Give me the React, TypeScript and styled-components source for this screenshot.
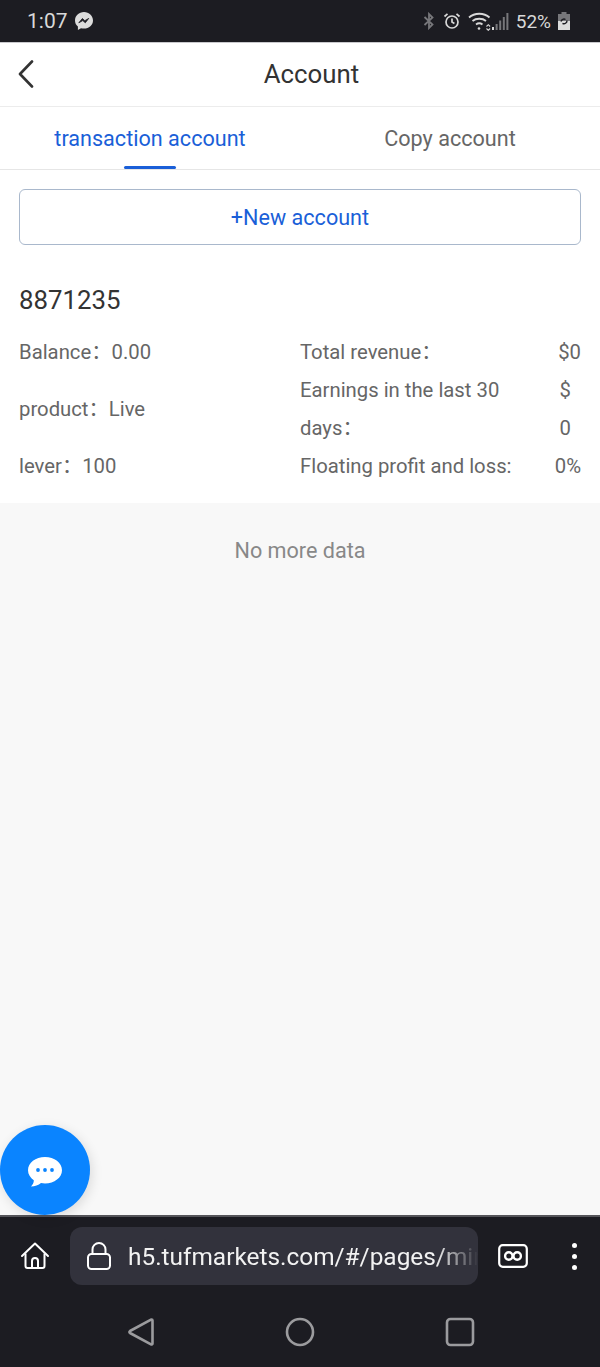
import styled, { createGlobalStyle } from "styled-components";

const GlobalStyle = createGlobalStyle`
    html, body {
        margin: 0;
        padding: 0;
        background: #f8f8f8;
    }
    * {
        box-sizing: border-box;
    }
    body {
        font-family: Roboto, "Noto Sans CJK SC", sans-serif;
    }
`;

const leftRows = [
    { label: "Balance：", value: "0.00" },
    { label: "product：", value: "Live" },
    { label: "lever：", value: "100" },
];

const rightRows = [
    { label: "Total revenue：", value: "$0", inset: 0 },
    { label: "Earnings in the last 30 days：", value: "$ 0", inset: 10 },
    { label: "Floating profit and loss:", value: "0%", inset: 0 },
];

function App() {
    return (
        <Page>
            <GlobalStyle />
            <StatusBar>
                <StatusLeft>
                    <StatusTime>1:07</StatusTime>
                    <svg width="20" height="20" viewBox="0 0 20 20">
                        <path
                            d="M10 1C5 1 1 4.7 1 9.4c0 2.5 1.1 4.6 2.9 6.1V19l3.1-1.8c1 .3 2 .4 3 .4 5 0 9-3.6 9-8.2S15 1 10 1z"
                            fill="#dcdcdc"
                        />
                        <path
                            d="M4.8 11.8l3.6-4.3 2.4 2.2 3.9-2.3-3.4 4.4-2.5-2.2z"
                            fill="#1c1c22"
                            stroke="#1c1c22"
                            strokeWidth="0.8"
                        />
                    </svg>
                </StatusLeft>
                <StatusRight>
                    <svg width="14" height="18" viewBox="0 0 14 18" fill="none" stroke="#77777b" strokeWidth="1.8">
                        <path d="M2.5 5l8 7.5L7 16V2l3.5 3.5-8 7.5" />
                    </svg>
                    <svg width="18" height="18" viewBox="0 0 18 18" fill="none" stroke="#d8d8d8" strokeWidth="1.7">
                        <circle cx="9" cy="10" r="6" />
                        <path d="M9 6.5V10l2.4 1.4" />
                        <path d="M1.5 4.5l3-2.6M16.5 4.5l-3-2.6" />
                    </svg>
                    <WifiGroup>
                        <svg width="24" height="20" viewBox="0 0 24 20" fill="none" stroke="#d8d8d8" strokeWidth="1.8">
                            <path d="M1 6.5c5.5-5 15-5 20.5 0" />
                            <path d="M4.5 10c3.5-3 10-3 13.5 0" />
                            <path d="M8 13.5c2-1.5 4.5-1.5 6.5 0" />
                            <circle cx="11" cy="17.5" r="1.3" fill="#d8d8d8" stroke="none" />
                            <path d="M18.5 15.5l1.8-1.8 1.8 1.8M18.5 17.5l1.8 1.8 1.8-1.8" strokeWidth="1.1" />
                        </svg>
                        <svg width="18" height="18" viewBox="0 0 18 18" fill="#77777b">
                            <rect x="0" y="15" width="2" height="3" fill="#d8d8d8" />
                            <rect x="3.6" y="12" width="2" height="6" />
                            <rect x="7.2" y="8.5" width="2" height="9.5" />
                            <rect x="10.8" y="5" width="2" height="13" />
                            <rect x="14.4" y="1" width="2" height="17" />
                        </svg>
                    </WifiGroup>
                    <BatteryText>52%</BatteryText>
                    <svg width="12" height="18" viewBox="0 0 12 18">
                        <rect x="3.5" y="0" width="5" height="2" fill="#77777b" />
                        <rect x="0" y="2" width="12" height="7" fill="#77777b" />
                        <rect x="0" y="9" width="12" height="9" fill="#dcdcdc" />
                        <path
                            d="M3 9.5a3 3 0 0 1 4.5-2M9 8.5a3 3 0 0 1-4.5 2.8"
                            fill="none"
                            stroke="#1c1c22"
                            strokeWidth="1.4"
                        />
                    </svg>
                </StatusRight>
            </StatusBar>

            <Header>
                <BackButton>
                    <svg width="18" height="28" viewBox="0 0 18 28" fill="none" stroke="#333" strokeWidth="2.6" strokeLinecap="round" strokeLinejoin="round">
                        <path d="M15 1.5L3 14l12 12.5" />
                    </svg>
                </BackButton>
                <HeaderTitle>Account</HeaderTitle>
            </Header>

            <Tabs>
                <Tab $active>transaction account</Tab>
                <Tab>Copy account</Tab>
            </Tabs>

            <Card>
                <NewAccount>+New account</NewAccount>
                <AccountNumber>8871235</AccountNumber>
                <Details>
                    <LeftColumn>
                        {leftRows.map((row) => (
                            <div key={row.label}>
                                {row.label}
                                {row.value}
                            </div>
                        ))}
                    </LeftColumn>
                    <RightColumn>
                        {rightRows.map((row) => (
                            <RightRow key={row.label}>
                                <span>{row.label}</span>
                                <RightValue $inset={row.inset}>{row.value}</RightValue>
                            </RightRow>
                        ))}
                    </RightColumn>
                </Details>
            </Card>

            <Main>
                <NoMore>No more data</NoMore>
                <ChatButton>
                    <svg width="36" height="32" viewBox="0 0 36 32">
                        <path
                            d="M18 1C8.6 1 1 6.9 1 14.2c0 4 2.3 7.6 5.8 10 .1 2.3-1 4.4-2.8 6.3 3.900 0 7.500-1.400 10-3.400 1.300.2 2.600.3 4 .3 9.400 0 17-5.900 17-13.200S27.400 1 18 1z"
                            fill="#fff"
                        />
                        <circle cx="11" cy="14" r="1.9" fill="#0a84ff" />
                        <circle cx="18" cy="14" r="1.9" fill="#0a84ff" />
                        <circle cx="25" cy="14" r="1.9" fill="#0a84ff" />
                    </svg>
                </ChatButton>
            </Main>

            <BrowserBar>
                <svg width="30" height="30" viewBox="0 0 30 30" fill="none" stroke="#fff" strokeWidth="2" strokeLinejoin="round">
                    <path d="M2 15L15 2.5 28 15" strokeLinecap="round" />
                    <path d="M5.5 12.5V25a2 2 0 0 0 2 2h15a2 2 0 0 0 2-2V12.5" />
                    <path d="M12 27v-7a3 3 0 0 1 6 0v7" />
                </svg>
                <UrlBox>
                    <svg width="26" height="30" viewBox="0 0 26 30" fill="none" stroke="#fff" strokeWidth="2">
                        <rect x="2" y="13" width="22" height="15" rx="3.5" />
                        <path d="M6.5 13V8.5a6.5 6.5 0 0 1 13 0V13" />
                    </svg>
                    <UrlText>h5.tufmarkets.com/#/pages/mine</UrlText>
                </UrlBox>
                <svg width="30" height="24" viewBox="0 0 30 24" fill="none" stroke="#fff">
                    <rect x="1.2" y="1.2" width="27.6" height="21.6" rx="3.5" strokeWidth="2.2" />
                    <circle cx="10.8" cy="12" r="3.7" strokeWidth="2.4" />
                    <circle cx="19.2" cy="12" r="3.7" strokeWidth="2.4" />
                </svg>
                <MenuDots>
                    <i />
                    <i />
                    <i />
                </MenuDots>
            </BrowserBar>

            <NavBar>
                <svg width="28" height="30" viewBox="0 0 28 30" fill="none" stroke="#9b9b9e" strokeWidth="2.6" strokeLinejoin="round">
                    <path d="M24.5 2.5c.6 0 1 .4 1 1v23c0 .8-.8 1.2-1.5.8L3 16c-.8-.5-.8-1.5 0-2L24 2.7z" />
                </svg>
                <svg width="30" height="30" viewBox="0 0 30 30" fill="none" stroke="#9b9b9e" strokeWidth="2.6">
                    <circle cx="15" cy="15" r="13" />
                </svg>
                <svg width="30" height="30" viewBox="0 0 30 30" fill="none" stroke="#9b9b9e" strokeWidth="2.6">
                    <rect x="2" y="2" width="26" height="26" rx="3.5" />
                </svg>
            </NavBar>
        </Page>
    );
}

export default App;

const Page = styled.div`
    width: 600px;
    height: 1367px;
    display: flex;
    flex-direction: column;
    overflow: hidden;
    background: #f8f8f8;
    color: #666;
`;

const StatusBar = styled.div`
    height: 43px;
    flex-shrink: 0;
    background: #1c1c22;
    display: flex;
    align-items: center;
    justify-content: space-between;
    padding: 0 30px 0 27px;
    border-bottom: 1px solid #c9c9cd;
`;

const StatusLeft = styled.div`
    display: flex;
    align-items: center;
    gap: 6px;
`;

const StatusTime = styled.span`
    font-size: 21px;
    color: #d8d8d8;
`;

const StatusRight = styled.div`
    display: flex;
    align-items: center;
    gap: 7px;
`;

const WifiGroup = styled.div`
    display: flex;
    align-items: center;
    margin-right: -1px;
`;

const BatteryText = styled.span`
    font-size: 19px;
    color: #d8d8d8;
`;

const Header = styled.div`
    height: 64px;
    flex-shrink: 0;
    position: relative;
    background: #fff;
    display: flex;
    align-items: center;
    justify-content: center;
    padding: 0 0 2px 23px;
    border-bottom: 1px solid #ececec;
`;

const BackButton = styled.div`
    position: absolute;
    left: 17px;
    top: 17px;
    display: flex;
`;

const HeaderTitle = styled.h1`
    margin: 0;
    font-size: 25.8px;
    font-weight: 400;
    color: #333;
`;

const Tabs = styled.div`
    height: 63px;
    flex-shrink: 0;
    background: #fff;
    display: flex;
    border-bottom: 1px solid #e6e6e6;
`;

const Tab = styled.div<{ $active?: boolean }>`
    flex: 1;
    position: relative;
    display: flex;
    justify-content: center;
    align-items: center;
    font-size: 21.6px;
    color: ${(p) => (p.$active ? "#1a5fd8" : "#666")};

    &::after {
        content: "";
        display: ${(p) => (p.$active ? "block" : "none")};
        position: absolute;
        left: 50%;
        bottom: 0;
        width: 52px;
        height: 3px;
        margin-left: -26px;
        border-radius: 2px;
        background: #1a5fd8;
    }
`;

const Card = styled.div`
    flex-shrink: 0;
    background: #fff;
    padding: 19px 19px 18px;
`;

const NewAccount = styled.div`
    height: 56px;
    border: 1px solid #a9b8cc;
    border-radius: 6px;
    display: flex;
    align-items: center;
    justify-content: center;
    font-size: 21.6px;
    color: #1a5fd8;
`;

const AccountNumber = styled.div`
    margin-top: 39px;
    font-size: 25.8px;
    line-height: 32px;
    color: #333;
`;

const Details = styled.div`
    margin-top: 17px;
    display: grid;
    grid-template-columns: 281px 1fr;
    font-size: 20.3px;
    line-height: 38px;
`;

const LeftColumn = styled.div`
    display: flex;
    flex-direction: column;
    justify-content: space-between;
`;

const RightColumn = styled.div`
    display: flex;
    flex-direction: column;
`;

const RightRow = styled.div`
    display: flex;
    justify-content: space-between;
    gap: 26px;
`;

const RightValue = styled.span<{ $inset: number }>`
    flex-shrink: 0;
    width: min-content;
    margin-right: ${(p) => p.$inset}px;
    text-align: center;
`;

const Main = styled.div`
    flex: 1;
    position: relative;
    text-align: center;
`;

const NoMore = styled.div`
    margin-top: 34px;
    font-size: 21.6px;
    line-height: 28px;
    color: #888;
`;

const ChatButton = styled.div`
    position: absolute;
    left: 0;
    bottom: 0;
    width: 90px;
    height: 90px;
    padding-top: 4px;
    border-radius: 50%;
    background: #0a84ff;
    box-shadow: 2px 3px 12px rgba(0, 0, 0, 0.12);
    display: flex;
    align-items: center;
    justify-content: center;
`;

const BrowserBar = styled.div`
    height: 84px;
    flex-shrink: 0;
    background: #1c1c22;
    border-top: 2px solid #55555a;
    display: flex;
    align-items: center;
    padding: 10px 23px 14px 20px;
    gap: 20px;
`;

const UrlBox = styled.div`
    width: 408px;
    flex-shrink: 0;
    height: 58px;
    border-radius: 12px;
    background: #32323c;
    display: flex;
    align-items: center;
    gap: 16px;
    padding-left: 16px;
    overflow: hidden;
`;

const UrlText = styled.span`
    font-size: 24.4px;
    white-space: nowrap;
    color: #f2f2f2;
    flex: 1;
    overflow: hidden;
    -webkit-mask-image: linear-gradient(to right, #000 88%, transparent 100%);
    mask-image: linear-gradient(to right, #000 88%, transparent 100%);
`;

const MenuDots = styled.div`
    display: flex;
    flex-direction: column;
    gap: 6px;
    margin-left: 24px;

    i {
        display: block;
        width: 5px;
        height: 5px;
        border-radius: 50%;
        background: #fff;
    }
`;

const NavBar = styled.div`
    height: 68px;
    flex-shrink: 0;
    background: #1c1c22;
    display: flex;
    align-items: flex-start;
    justify-content: space-between;
    padding: 18px 125px 0 127px;
`;
